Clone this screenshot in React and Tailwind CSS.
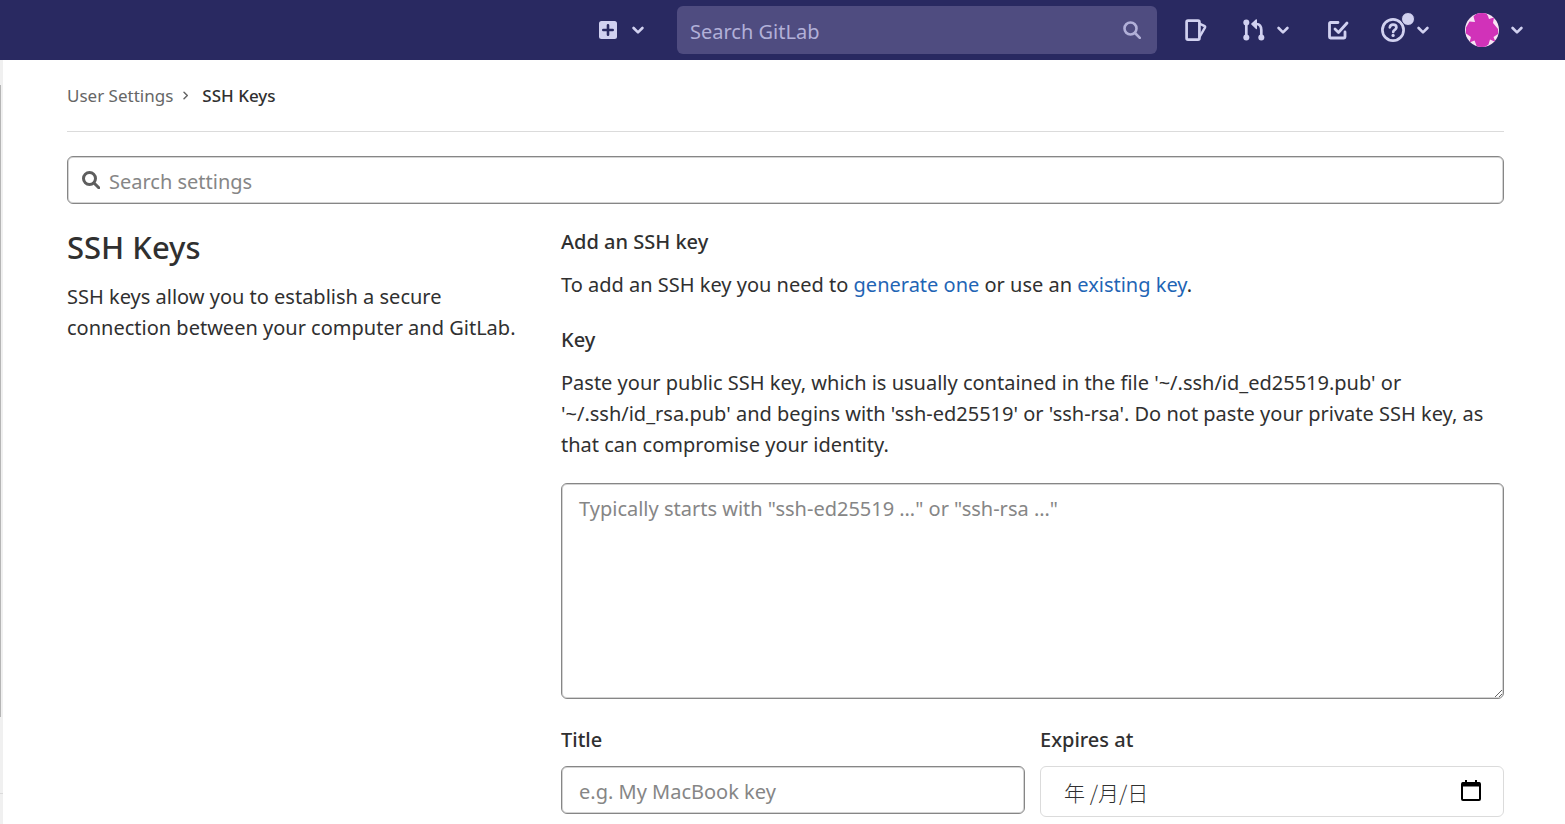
import React from "react";

const Chevron = ({ className = "" }) => (
  <svg viewBox="0 0 12 12" className={`size-3 shrink-0 ${className}`} fill="none" stroke="currentColor" strokeWidth="2.6" strokeLinecap="round" strokeLinejoin="round" aria-hidden="true">
    <path d="M1.6 4 6 8.400l4.400-4.400" />
  </svg>
);

const SearchIcon = ({ className }) => (
  <svg viewBox="0 0 18 18" className={className} fill="none" stroke="currentColor" aria-hidden="true">
    <circle cx="7.500" cy="7.500" r="6" />
    <path d="m12 12 4.800 4.800" strokeLinecap="round" />
  </svg>
);

const PlusSquare = () => (
  <svg viewBox="0 0 18 18" className="size-[18px]" aria-hidden="true">
    <rect width="18" height="18" rx="2.500" fill="currentColor" />
    <path d="M9 4.300v9.400M4.300 9h9.400" stroke="#292961" strokeWidth="2.600" strokeLinecap="round" />
  </svg>
);

const IssuesIcon = () => (
  <svg viewBox="0 0 22 22" className="size-[22px]" fill="none" stroke="currentColor" strokeWidth="2.700" strokeLinejoin="round" aria-hidden="true">
    <rect x="1.600" y="1.600" width="12.800" height="19" rx="1.400" />
    <path d="M14.400 4.600 19.700 7.200a.8.8 0 0 1 .4 1.100L14.400 18.200" strokeWidth="2.400" />
  </svg>
);

const MergeIcon = () => (
  <svg viewBox="0 0 22 22" className="size-[22px]" fill="none" stroke="currentColor" strokeWidth="2.700" aria-hidden="true">
    <path d="M3.300 4v14M18.300 18v-7c0-3.600-1.300-5.800-5-6" />
    <circle cx="3.300" cy="3.600" r="3" fill="currentColor" stroke="none" />
    <circle cx="3.300" cy="18.600" r="3" fill="currentColor" stroke="none" />
    <circle cx="18.300" cy="18.600" r="3" fill="currentColor" stroke="none" />
    <path d="M13.400.8v8.800L8.800 5z" fill="currentColor" strokeWidth="1.200" strokeLinejoin="round" />
  </svg>
);

const TodoIcon = () => (
  <svg viewBox="0 0 22 20" className="h-5 w-[22px]" fill="none" stroke="currentColor" strokeWidth="2.800" strokeLinecap="round" strokeLinejoin="round" aria-hidden="true">
    <path d="M11 2.500H3.500a1 1 0 0 0-1 1v13.500a1 1 0 0 0 1 1H17a1 1 0 0 0 1-1V12" />
    <path d="m8 9 3.500 3.500L20 3" />
  </svg>
);

const HelpIcon = () => (
  <svg viewBox="0 0 24 24" className="size-6" fill="none" stroke="currentColor" strokeWidth="2.700" strokeLinecap="round" aria-hidden="true">
    <circle cx="12" cy="12" r="10.600" />
    <path d="M8.800 9.400c.3-1.900 1.600-2.700 3.200-2.700 2 0 3.400 1.100 3.400 2.800 0 2.400-3.200 2.200-3.200 4.500" />
    <circle cx="12.100" cy="17.400" r="1.600" fill="currentColor" stroke="none" />
  </svg>
);

const Avatar = () => (
  <svg viewBox="0 0 34 34" className="size-[34px] rounded-full" aria-hidden="true">
    <rect width="34" height="34" fill="#f7e3f4" />
    <path d="M4.500 8.500 10 9 8.500 3.500 12 0h9l2 3 1 3 5-1.500L28 10l5 6v5l-4.500 3 2 5L25 26.500l-1.500 5L20 34h-8l-2.500-6.500-5 2L6 24l-5-3.500v-6z" fill="#d132b9" />
  </svg>
);

const CalendarIcon = () => (
  <svg viewBox="0 0 20 21" className="h-[21px] w-5" fill="none" stroke="currentColor" strokeWidth="2" aria-hidden="true">
    <rect x="1" y="3" width="18" height="17" rx="1" />
    <path d="M1 4.500h18" strokeWidth="4" />
    <path d="M5 0v4M15 0v4" />
  </svg>
);

const field = "block w-full rounded-md border border-[#868686] bg-white text-[#303030] shadow-[inset_0_0_0_1px_#d4d4d4] placeholder:text-[#868686] placeholder:opacity-100";

export default function App() {
  return (
    <div className="flex min-h-screen flex-col bg-white font-['Noto_Sans','Noto_Sans_CJK_SC',sans-serif] text-xl leading-[31px] text-[#303030]">
      <header className="flex h-[60px] items-center justify-end bg-[#292961] pr-[42px] text-[#d1d1f0]">
        <button aria-label="Create new" className="mr-[33px] flex items-center gap-[15px]">
          <PlusSquare />
          <Chevron />
        </button>
        <label className="mr-7 flex h-12 w-[480px] items-center rounded-md bg-[#4f4c80] px-[13px]">
          <input aria-label="Search GitLab" placeholder="Search GitLab" className="min-w-0 flex-1 bg-transparent pt-0.5 outline-none placeholder:text-[#b2b0d8] placeholder:opacity-100" />
          <SearchIcon className="mr-[3px] size-[18px] stroke-[2.600] text-[#b2b0d8]" />
        </label>
        <a href="#issues" aria-label="Issues" className="mr-9"><IssuesIcon /></a>
        <a href="#merge-requests" aria-label="Merge requests" className="mr-[38px] flex items-center gap-3">
          <MergeIcon />
          <Chevron />
        </a>
        <a href="#todos" aria-label="To-Do List" className="mr-8"><TodoIcon /></a>
        <button aria-label="Help" className="relative mr-9 flex items-center gap-3">
          <HelpIcon />
          <span className="absolute -top-[6px] left-[20px] size-[14px] rounded-full border border-[#292961] bg-[#d1d1f0]" />
          <Chevron />
        </button>
        <button aria-label="User menu" className="flex items-center gap-3">
          <Avatar />
          <Chevron />
        </button>
      </header>

      <div className="flex flex-1">
        <aside className="flex w-[3px] flex-col bg-[#f0f0f0] pt-[25px]">
          <div className="h-[632px] w-px bg-[#b5b5b5]" />
          <div className="mt-[76px] h-px bg-[#dbdbdb]" />
        </aside>
        <main className="min-w-0 flex-1 pr-[61px] pl-16">
          <nav aria-label="Breadcrumb" className="flex h-[72px] items-center border-b border-[#dbdbdb] text-[17px]">
            <a href="#settings" className="text-[#666]">User Settings</a>
            <Chevron className="mr-3 ml-2 size-[9px] -rotate-90 stroke-[2] text-[#666]" />
            <a href="#ssh-keys" className="font-medium text-[#303030]">SSH Keys</a>
          </nav>

          <label className="mt-6 flex h-12 items-center gap-[9px] rounded-md border border-[#868686] px-[14px] shadow-[inset_0_0_0_1px_#d4d4d4]">
            <SearchIcon className="size-[18px] stroke-[3] text-[#5e5e5e]" />
            <input aria-label="Search settings" placeholder="Search settings" className="min-w-0 flex-1 bg-transparent pt-0.5 outline-none placeholder:text-[#868686] placeholder:opacity-100" />
          </label>

          <div className="mt-6 grid grid-cols-3 gap-x-[45px]">
            <section>
              <h1 className="text-[31px] leading-[38px] font-medium">SSH Keys</h1>
              <p className="mt-[15px]">SSH keys allow you to establish a secure connection between your computer and GitLab.</p>
            </section>
            <form className="col-span-2">
              <h2 className="leading-7 font-medium">Add an SSH key</h2>
              <p className="mt-[13px]">
                To add an SSH key you need to <a href="#generate" className="text-[#1f65b5]">generate one</a> or use an <a href="#existing" className="text-[#1f65b5]">existing key</a>.
              </p>
              <label htmlFor="key" className="mt-6 block font-medium">Key</label>
              <p className="mt-3">
                Paste your public SSH key, which is usually contained in the file '~/.ssh/id_ed25519.pub' or '~/.ssh/id_rsa.pub' and begins with 'ssh-ed25519' or 'ssh-rsa'. Do not paste your private SSH key, as that can compromise your identity.
              </p>
              <textarea id="key" placeholder={'Typically starts with "ssh-ed25519 …" or "ssh-rsa …"'} className={`${field} mt-[23px] h-[216px] resize-y px-[17px] pt-[9px] pb-2`} />
              <div className="mt-[25px] grid grid-cols-2 gap-[15px]">
                <div>
                  <label htmlFor="title" className="block font-medium">Title</label>
                  <input id="title" placeholder="e.g. My MacBook key" className={`${field} mt-[11px] h-12 px-[17px] pt-0.5`} />
                </div>
                <div>
                  <label htmlFor="expires" className="block font-medium">Expires at</label>
                  <div className="mt-[11px] flex h-[51px] items-center rounded-md border border-[#dbdbdb] pr-[22px] pl-[23px]">
                    <input id="expires" defaultValue="年 /月/日" className="min-w-0 flex-1 bg-transparent pt-0.5 font-['Noto_Sans_CJK_SC',sans-serif] text-[21px] font-light outline-none" />
                    <button type="button" aria-label="Choose date" className="pb-0.5 text-black"><CalendarIcon /></button>
                  </div>
                </div>
              </div>
            </form>
          </div>
        </main>
      </div>
    </div>
  );
}
